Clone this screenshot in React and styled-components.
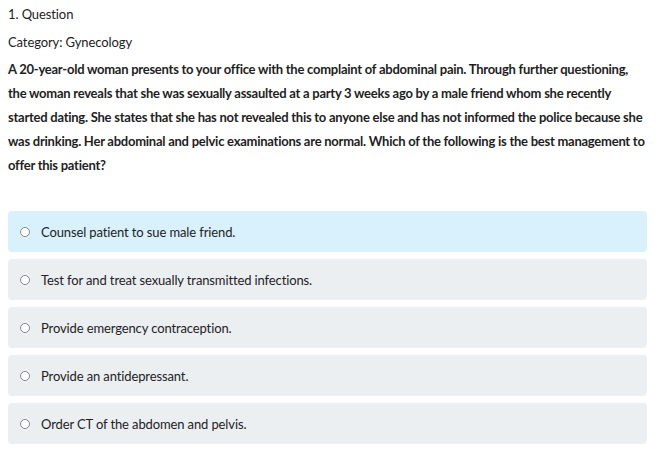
import React from "react";
import styled, { createGlobalStyle } from "styled-components";

const Global = createGlobalStyle`
  html, body { margin: 0; padding: 0; background: #fff; }
  body { font-family: Lato, "Open Sans", sans-serif; color: #222; }
`;

const Page = styled.div`
  padding: 1px 16px 0 8px;
`;

const Heading = styled.div`
  font-size: 13px;
  line-height: 26px;
  letter-spacing: -0.1px;
  color: #222;
  margin-bottom: 2px;
`;

const Stem = styled.p`
  margin: 0;
  font-size: 13px;
  font-weight: 700;
  line-height: 24px;
  letter-spacing: -0.25px;
  color: #1e1e1e;
`;

const Options = styled.div`
  display: flex;
  flex-direction: column;
  gap: 7px;
  margin-top: 34px;
`;

const Option = styled.label`
  display: flex;
  align-items: center;
  gap: 11px;
  height: 41px;
  padding-left: 12px;
  border-radius: 4px;
  background: ${(p) => (p.$active ? "#d9f1fc" : "#eceff2")};
  font-size: 13px;
  letter-spacing: -0.12px;
  color: #222;
  cursor: pointer;
`;

const Radio = styled.span`
  width: 8px;
  height: 8px;
  border-radius: 50%;
  border: 1px solid #888;
  background: #fff;
  flex: none;
`;

const options = [
  "Counsel patient to sue male friend.",
  "Test for and treat sexually transmitted infections.",
  "Provide emergency contraception.",
  "Provide an antidepressant.",
  "Order CT of the abdomen and pelvis.",
];

export default function App() {
  return (
    <>
      <Global />
      <Page>
        <Heading>1. Question</Heading>
        <Heading>Category: Gynecology</Heading>
        <Stem>
          A 20-year-old woman presents to your office with the complaint of abdominal pain. Through further questioning,
          the woman reveals that she was sexually assaulted at a party 3 weeks ago by a male friend whom she recently
          started dating. She states that she has not revealed this to anyone else and has not informed the police because she
          was drinking. Her abdominal and pelvic examinations are normal. Which of the following is the best management to
          offer this patient?
        </Stem>
        <Options>
          {options.map((o, i) => (
            <Option key={i} $active={i === 0}>
              <Radio />
              {o}
            </Option>
          ))}
        </Options>
      </Page>
    </>
  );
}
